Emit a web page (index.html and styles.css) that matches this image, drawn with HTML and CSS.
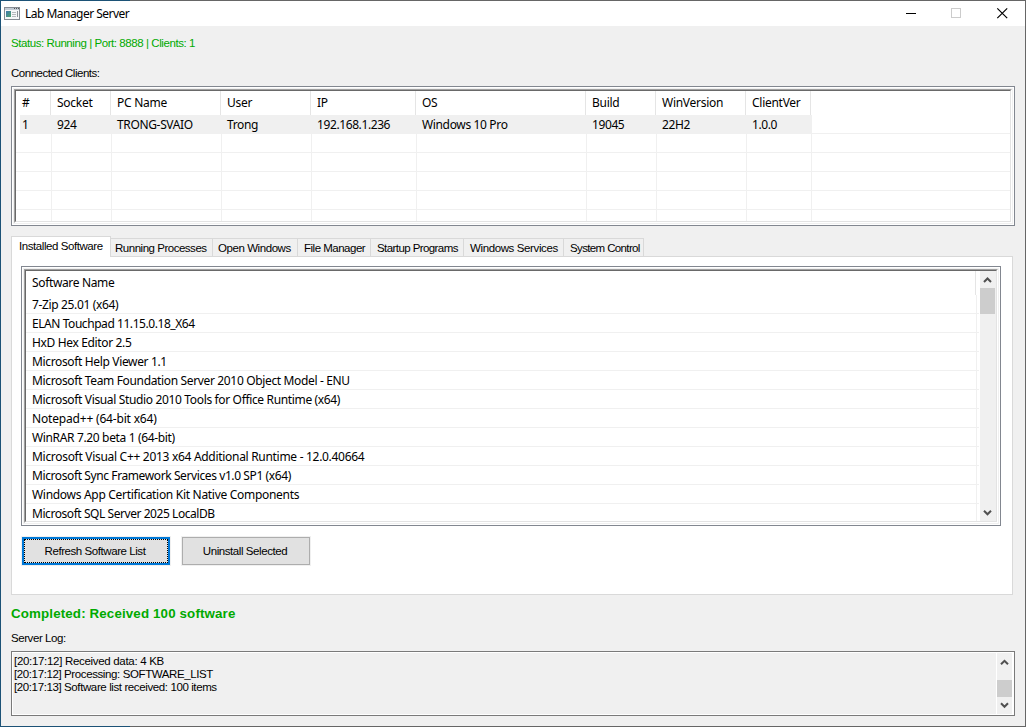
FILE: index.html
```html
<!DOCTYPE html>
<html lang="en">
<head>
<meta charset="utf-8">
<title>Lab Manager Server</title>
<link rel="stylesheet" href="styles.css">
</head>
<body>
<div class="window">
  <header class="titlebar">
    <svg class="app-icon" width="16" height="13" viewBox="0 0 16 13" shape-rendering="crispEdges">
      <defs><linearGradient id="pic" x1="0" y1="0" x2="1" y2="1"><stop offset="0" stop-color="#3f78b0"/><stop offset="1" stop-color="#4fa36a"/></linearGradient></defs>
      <rect width="16" height="13" fill="#858b93"/>
      <rect x="1" y="1" width="14" height="2" fill="#c3cbd4"/>
      <rect x="10" y="1" width="1" height="1" fill="#555"/><rect x="12" y="1" width="1" height="1" fill="#555"/><rect x="14" y="1" width="1" height="1" fill="#555"/>
      <rect x="1" y="3" width="14" height="9" fill="#f6f7f8"/>
      <rect x="2" y="4" width="5" height="6" fill="url(#pic)"/>
      <rect x="8" y="5" width="4" height="1" fill="#b5b9bd"/><rect x="8" y="7" width="4" height="1" fill="#b5b9bd"/><rect x="8" y="9" width="4" height="1" fill="#b5b9bd"/>
      <rect x="13" y="4" width="1" height="6" fill="#8d9298"/>
    </svg>
    <h1 class="title">Lab Manager Server</h1>
    <div class="controls">
      <svg width="46" height="25" viewBox="0 0 46 25" shape-rendering="crispEdges"><path d="M19 12.5h10" stroke="#000"/></svg>
      <svg width="46" height="25" viewBox="0 0 46 25" shape-rendering="crispEdges"><rect x="18.5" y="7.5" width="9" height="9" fill="none" stroke="#ccc"/></svg>
      <svg width="46" height="25" viewBox="0 0 46 25"><path d="M18.3 7.3l9.9 9.9M28.2 7.3l-9.9 9.9" stroke="#000" stroke-width="1.2"/></svg>
    </div>
  </header>

  <p class="label status">Status: Running | Port: 8888 | Clients: 1</p>
  <p class="label clients-label">Connected Clients:</p>

  <section class="sunken clients"><div class="bevel"><div class="view">
    <div class="grid-row head"><span>#</span><span>Socket</span><span>PC Name</span><span>User</span><span>IP</span><span>OS</span><span>Build</span><span>WinVersion</span><span>ClientVer</span></div>
    <div class="grid-row selected"><span>1</span><span>924</span><span>TRONG-SVAIO</span><span>Trong</span><span class="tight">192.168.1.236</span><span>Windows 10 Pro</span><span class="tight">19045</span><span class="tight">22H2</span><span class="tight">1.0.0</span><i></i></div>
    <div class="grid-row"><span></span><span></span><span></span><span></span><span></span><span></span><span></span><span></span><span></span><i></i></div>
    <div class="grid-row"><span></span><span></span><span></span><span></span><span></span><span></span><span></span><span></span><span></span><i></i></div>
    <div class="grid-row"><span></span><span></span><span></span><span></span><span></span><span></span><span></span><span></span><span></span><i></i></div>
    <div class="grid-row"><span></span><span></span><span></span><span></span><span></span><span></span><span></span><span></span><span></span><i></i></div>
    <div class="grid-row"><span></span><span></span><span></span><span></span><span></span><span></span><span></span><span></span><span></span><i></i></div>
  </div></div></section>

  <nav class="tabs label">
    <span class="tab active">Installed Software</span><span class="tab t2">Running Processes</span><span class="tab t3">Open Windows</span><span class="tab t4">File Manager</span><span class="tab t5">Startup Programs</span><span class="tab t6">Windows Services</span><span class="tab t7">System Control</span><span class="tab-rest"></span>
  </nav>

  <main class="panel">
    <section class="sunken software"><div class="bevel"><div class="view split">
      <div class="list">
        <div class="list-head">Software Name</div>
        <ul class="items">
          <li>7-Zip 25.01 (x64)</li>
          <li class="tighter">ELAN Touchpad 11.15.0.18_X64</li>
          <li>HxD Hex Editor 2.5</li>
          <li>Microsoft Help Viewer 1.1</li>
          <li>Microsoft Team Foundation Server 2010 Object Model - ENU</li>
          <li>Microsoft Visual Studio 2010 Tools for Office Runtime (x64)</li>
          <li class="loose">Notepad++ (64-bit x64)</li>
          <li>WinRAR 7.20 beta 1 (64-bit)</li>
          <li class="semi">Microsoft Visual C++ 2013 x64 Additional Runtime - 12.0.40664</li>
          <li class="tight">Microsoft Sync Framework Services v1.0 SP1 (x64)</li>
          <li class="semi">Windows App Certification Kit Native Components</li>
          <li class="tighter">Microsoft SQL Server 2025 LocalDB</li>
        </ul>
      </div>
      <div class="scroll">
        <svg width="15" height="17" viewBox="0 0 15 17"><path d="M4 11L7.5 7.5L11 11" fill="none" stroke="#505050" stroke-width="2"/></svg>
        <div class="thumb"></div>
        <svg class="down" width="15" height="17" viewBox="0 0 15 17"><path d="M4 6.8L7.5 10.3L11 6.8" fill="none" stroke="#505050" stroke-width="2"/></svg>
      </div>
    </div></div></section>
    <div class="actions">
      <button class="btn label primary"><span>Refresh Software List</span></button>
      <button class="btn label">Uninstall Selected</button>
    </div>
  </main>

  <p class="completed">Completed: Received 100 software</p>
  <p class="label log-label">Server Log:</p>
  <section class="log">
    <div class="log-text label"><div class="l1">[20:17:12] Received data: 4 KB</div><div>[20:17:12] Processing: SOFTWARE_LIST</div><div>[20:17:13] Software list received: 100 items</div></div>
    <div class="scroll log-scroll">
      <svg width="15" height="17" viewBox="0 0 15 17"><path d="M4 11.3L7.5 7.8L11 11.3" fill="none" stroke="#505050" stroke-width="2"/></svg>
      <div class="thumb"></div>
      <svg class="down" width="15" height="17" viewBox="0 0 15 17"><path d="M4 6.3L7.5 9.8L11 6.3" fill="none" stroke="#505050" stroke-width="2"/></svg>
    </div>
  </section>
</div>
</body>
</html>
```
FILE: styles.css
```css
* { box-sizing: border-box; }
body { margin: 0; }
p, h1, ul { margin: 0; padding: 0; }
svg { display: block; }

.window {
  display: flex;
  flex-direction: column;
  width: 1026px;
  height: 727px;
  overflow: hidden;
  background: #f0f0f0;
  border: 1px solid #666;
  border-image: linear-gradient(90deg, #1c5276 130px, #666 130px) 1;
  color: #000;
  font: 12px/16px "Noto Sans", "Open Sans", sans-serif;
  white-space: nowrap;
}

.titlebar {
  display: flex;
  align-items: center;
  flex: none;
  height: 25px;
  padding-left: 3px;
  background: #fff;
}
.title { margin-left: 5px; font-size: 12px; font-weight: 400; letter-spacing: -0.52px; }
.controls { display: flex; margin-left: auto; }

.label {
  font: 11.5px/14px "Liberation Sans", Arial, sans-serif;
  letter-spacing: -0.43px;
}
.status { margin: 10px 0 0 10px; color: #00aa00; }
.clients-label { margin: 16px 0 0 10px; letter-spacing: -0.48px; }

/* Sunken list frame: outer line, light gap, two-tone bevel */
.sunken {
  flex: none;
  border: 1px solid #828790;
  padding: 2px;
  background: #f0f0f0;
  box-shadow: inset 0 0 0 1px #fff;
}
.bevel { height: 100%; border: 1px solid; border-color: #a0a0a0 #fff #fff #a0a0a0; }
.view {
  height: 100%;
  overflow: hidden;
  border: 1px solid;
  border-color: #696969 #e3e3e3 #e3e3e3 #696969;
  background: #fff;
  letter-spacing: -0.35px;
}
.loose { letter-spacing: -0.18px; }
.semi { letter-spacing: -0.3px; }
.tight { letter-spacing: -0.4px; }
.tighter { letter-spacing: -0.44px; }

.clients { width: 1004px; height: 140px; margin: 6px 0 0 10px; }
.grid-row {
  display: grid;
  grid-template-columns: 36px 60px 110px 90px 105px 170px 70px 90px 65px 1fr;
  height: 19px;
  line-height: 20px;
}
.grid-row span {
  height: 19px;
  padding-left: 5px;
  border-right: 1px solid #f0f0f0;
  border-bottom: 1px solid #f0f0f0;
}
.grid-row span:first-child { padding-left: 6px; }
.grid-row i { height: 19px; border-bottom: 1px solid #f0f0f0; }
.grid-row.head {
  grid-template-columns: 35px 60px 110px 90px 105px 170px 70px 90px 65px 1fr;
  height: 24px;
  line-height: 24px;
  letter-spacing: -0.27px;
}
.grid-row.head span { height: 24px; padding-left: 6px; border-right-color: #e5e5e5; border-bottom: 0; }
.selected span { background: #f0f0f0; }
.selected span:first-child { margin-left: 4px; padding-left: 2px; }

.tabs {
  display: flex;
  align-items: flex-end;
  flex: none;
  width: 1002px;
  height: 21px;
  margin: 10px 0 0 10px;
}
.tab {
  height: 19px;
  padding: 2px 0 0 4px;
  border: 1px solid #d9d9d9;
  border-left: 0;
}
.tab.active {
  width: 100px;
  height: 21px;
  padding: 2px 0 0 7px;
  border-left: 1px solid #d9d9d9;
  border-bottom: 0;
  background: #fff;
}
.t2 { width: 102px; letter-spacing: -0.48px; }
.t3 { width: 85px; padding-left: 5px; }
.t4 { width: 73px; padding-left: 6px; letter-spacing: -0.5px; }
.t5 { width: 93px; padding-left: 6px; letter-spacing: -0.58px; }
.t6 { width: 100px; padding-left: 6px; letter-spacing: -0.38px; }
.t7 { width: 80px; padding-left: 6px; letter-spacing: -0.63px; }
.tab-rest { flex: 1; border-bottom: 1px solid #d9d9d9; }

.panel {
  flex: none;
  width: 1002px;
  height: 338px;
  margin-left: 10px;
  padding: 9px 0 0 9px;
  background: #fff;
  border: 1px solid #d9d9d9;
  border-top: 0;
}
.software { width: 980px; height: 260px; }
.split { display: flex; }
.list {
  width: 953px;
  background: linear-gradient(#f0f0f0, #f0f0f0) 950px 24px / 1px 100% no-repeat;
}
.list-head { width: 950px; height: 24px; padding-left: 6px; line-height: 24px; border-right: 1px solid #e5e5e5; }
.items { list-style: none; }
.items li { height: 19px; padding-left: 6px; line-height: 20px; border-bottom: 1px solid #f0f0f0; }

.scroll {
  display: flex;
  flex-direction: column;
  width: 16px;
  margin-left: auto;
  background: #f0f0f0;
}
.thumb { width: 15px; height: 26px; background: #cdcdcd; }
.down { margin-top: auto; }

.actions { display: flex; gap: 12px; padding: 11px 0 0 1px; }
.btn {
  width: 128px;
  height: 28px;
  padding: 0 2px 0 0;
  background: #e1e1e1;
  border: 1px solid #adadad;
  box-shadow: 0 0 0 1px #f0f0f0;
  color: #000;
}
.btn.primary { width: 148px; padding: 0; border: 2px solid #0078d7; }
.primary span { display: block; height: 24px; padding: 4px 2px 0 0; border: 1px dotted #000; }

.completed {
  margin: 11px 0 0 10px;
  color: #00aa00;
  font: bold 13.33px/16px "Liberation Sans", Arial, sans-serif;
  letter-spacing: 0.14px;
}
.log-label { margin: 9px 0 0 10px; }
.log {
  display: flex;
  flex: none;
  width: 1004px;
  height: 65px;
  margin: 6px 0 0 10px;
  border: 1px solid #7a7a7a;
  padding: 1px;
  box-shadow: inset 0 0 0 1px #fff;
}
.log-text { padding: 2px 0 0 1px; line-height: 13px; letter-spacing: -0.39px; }
.l1 { letter-spacing: -0.31px; }
.log-scroll { width: 17px; border-left: 1px solid #fff; border-right: 1px solid #fff; }
.log-scroll .thumb { height: 17px; margin-top: 10px; }
```
